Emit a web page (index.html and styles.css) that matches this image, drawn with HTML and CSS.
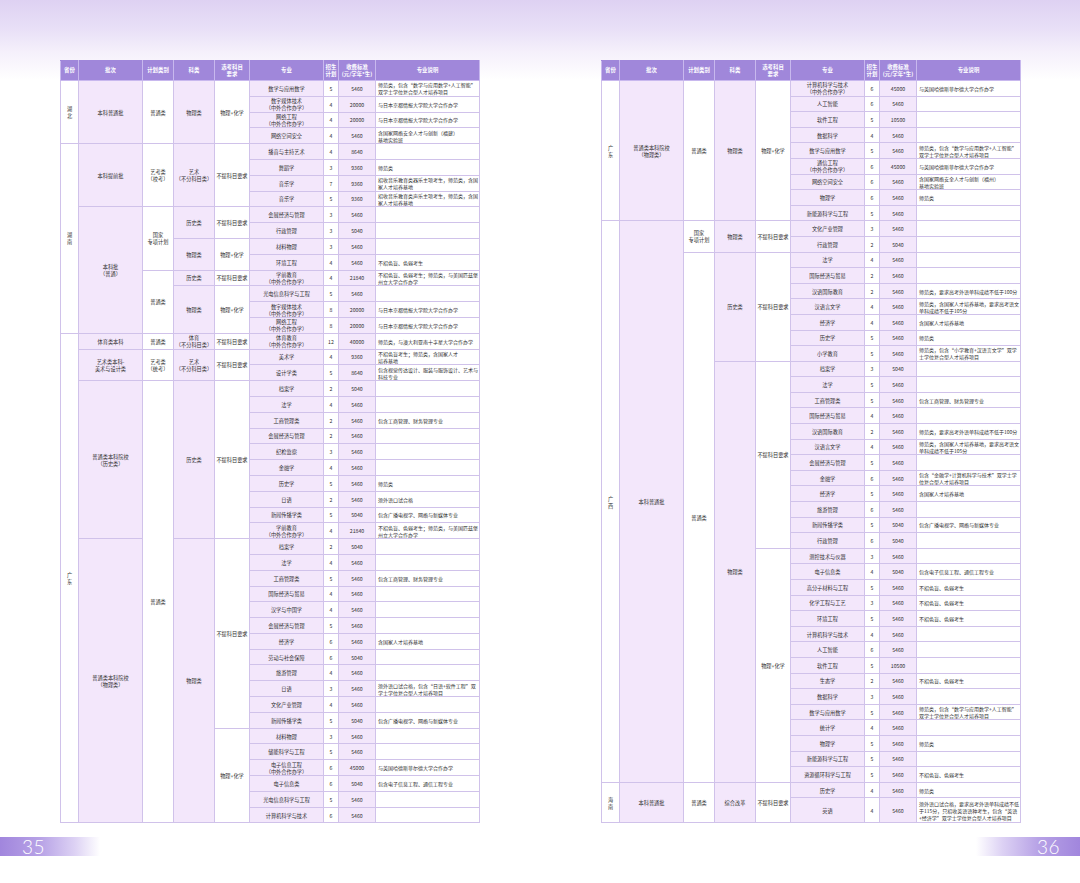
FILE: index.html
```html
<!DOCTYPE html>
<html lang="zh-CN">
<head>
<meta charset="utf-8">
<title>招生计划</title>
<link rel="stylesheet" href="styles.css">
</head>
<body>
<div class="spread">
  <section class="page page-left">
    <div class="sheet">
      <table class="plan plan-left">
        <colgroup>
          <col class="w-prov"><col class="w-batch"><col class="w-type"><col class="w-subj"><col class="w-req"><col class="w-major"><col class="w-num"><col class="w-fee"><col class="w-note">
        </colgroup>
        <tr class="head"><th>省份</th><th>批次</th><th>计划类别</th><th>科类</th><th>选考科目<br>要求</th><th>专业</th><th>招生<br>计划</th><th>收费标准<br>(元/学年*生)</th><th>专业说明</th></tr>
        <tr><td rowspan="4">湖<br>北</td><td rowspan="4" class="l">本科普通批</td><td rowspan="4">普通类</td><td rowspan="4" class="l">物理类</td><td rowspan="4">物理+化学</td><td class="l">数学与应用数学</td><td>5</td><td class="l">5460</td><td class="t">师范类，包含“数学与应用数学+人工智能”<br>双学士学位复合型人才培养项目</td></tr>
        <tr><td class="l">数字媒体技术<br>（中外合作办学）</td><td>4</td><td class="l">20000</td><td class="t">与日本京都情报大学院大学合作办学</td></tr>
        <tr><td class="l">网络工程<br>（中外合作办学）</td><td>4</td><td class="l">20000</td><td class="t">与日本京都情报大学院大学合作办学</td></tr>
        <tr><td class="l">网络空间安全</td><td>4</td><td class="l">5460</td><td class="t">含国家网络安全人才与创新（福建）<br>基地实验班</td></tr>
        <tr><td rowspan="12">湖<br>南</td><td rowspan="4" class="l">本科提前批</td><td rowspan="4">艺考类<br>（校考）</td><td rowspan="4" class="l">艺术<br>（不分科目类）</td><td rowspan="4">不提科目要求</td><td class="l">播音与主持艺术</td><td>4</td><td class="l">8640</td><td class="t"></td></tr>
        <tr><td class="l">舞蹈学</td><td>3</td><td class="l">9360</td><td class="t">师范类</td></tr>
        <tr><td class="l">音乐学</td><td>7</td><td class="l">9360</td><td class="t">招收音乐教育类器乐主项考生，师范类，含国<br>家人才培养基地</td></tr>
        <tr><td class="l">音乐学</td><td>5</td><td class="l">9360</td><td class="t">招收音乐教育类声乐主项考生，师范类，含国<br>家人才培养基地</td></tr>
        <tr><td rowspan="8" class="l">本科批<br>（普通）</td><td rowspan="4">国家<br>专项计划</td><td rowspan="2" class="l">历史类</td><td rowspan="2">不提科目要求</td><td class="l">会展经济与管理</td><td>3</td><td class="l">5460</td><td class="t"></td></tr>
        <tr><td class="l">行政管理</td><td>3</td><td class="l">5040</td><td class="t"></td></tr>
        <tr><td rowspan="2" class="l">物理类</td><td rowspan="2">物理+化学</td><td class="l">材料物理</td><td>3</td><td class="l">5460</td><td class="t"></td></tr>
        <tr><td class="l">环境工程</td><td>4</td><td class="l">5460</td><td class="t">不招色盲、色弱考生</td></tr>
        <tr><td rowspan="4">普通类</td><td class="l">历史类</td><td>不提科目要求</td><td class="l">学前教育<br>（中外合作办学）</td><td>4</td><td class="l">21840</td><td class="t">不招色盲、色弱考生；师范类，与美国匹兹堡<br>州立大学合作办学</td></tr>
        <tr><td rowspan="3" class="l">物理类</td><td rowspan="3">物理+化学</td><td class="l">光电信息科学与工程</td><td>5</td><td class="l">5460</td><td class="t"></td></tr>
        <tr><td class="l">数字媒体技术<br>（中外合作办学）</td><td>8</td><td class="l">20000</td><td class="t">与日本京都情报大学院大学合作办学</td></tr>
        <tr><td class="l">网络工程<br>（中外合作办学）</td><td>8</td><td class="l">20000</td><td class="t">与日本京都情报大学院大学合作办学</td></tr>
        <tr><td rowspan="31">广<br>东</td><td class="l">体育类本科</td><td>普通类</td><td class="l">体育<br>（不分科目类）</td><td>不提科目要求</td><td class="l">体育教育<br>（中外合作办学）</td><td>12</td><td class="l">40000</td><td class="t">师范类，与澳大利亚南十字星大学合作办学</td></tr>
        <tr><td rowspan="2" class="l">艺术类本科-<br>美术与设计类</td><td rowspan="2">艺考类<br>（统考）</td><td rowspan="2" class="l">艺术<br>（不分科目类）</td><td rowspan="2">不提科目要求</td><td class="l">美术学</td><td>4</td><td class="l">9360</td><td class="t">不招色盲考生；师范类，含国家人才<br>培养基地</td></tr>
        <tr><td class="l">设计学类</td><td>5</td><td class="l">8640</td><td class="t">包含视觉传达设计、服装与服饰设计、艺术与<br>科技专业</td></tr>
        <tr><td rowspan="10" class="l">普通类本科院校<br>（历史类）</td><td rowspan="28">普通类</td><td rowspan="10" class="l">历史类</td><td rowspan="10">不提科目要求</td><td class="l">档案学</td><td>2</td><td class="l">5040</td><td class="t"></td></tr>
        <tr><td class="l">法学</td><td>4</td><td class="l">5460</td><td class="t"></td></tr>
        <tr><td class="l">工商管理类</td><td>2</td><td class="l">5460</td><td class="t">包含工商管理、财务管理专业</td></tr>
        <tr><td class="l">会展经济与管理</td><td>2</td><td class="l">5460</td><td class="t"></td></tr>
        <tr><td class="l">纪检监察</td><td>3</td><td class="l">5460</td><td class="t"></td></tr>
        <tr><td class="l">金融学</td><td>4</td><td class="l">5460</td><td class="t"></td></tr>
        <tr><td class="l">历史学</td><td>5</td><td class="l">5460</td><td class="t">师范类</td></tr>
        <tr><td class="l">日语</td><td>2</td><td class="l">5460</td><td class="t">须外语口试合格</td></tr>
        <tr><td class="l">新闻传播学类</td><td>5</td><td class="l">5040</td><td class="t">包含广播电视学、网络与新媒体专业</td></tr>
        <tr><td class="l">学前教育<br>（中外合作办学）</td><td>4</td><td class="l">21840</td><td class="t">不招色盲、色弱考生；师范类，与美国匹兹堡<br>州立大学合作办学</td></tr>
        <tr><td rowspan="18" class="l">普通类本科院校<br>（物理类）</td><td rowspan="18" class="l">物理类</td><td rowspan="12">不提科目要求</td><td class="l">档案学</td><td>2</td><td class="l">5040</td><td class="t"></td></tr>
        <tr><td class="l">法学</td><td>4</td><td class="l">5460</td><td class="t"></td></tr>
        <tr><td class="l">工商管理类</td><td>5</td><td class="l">5460</td><td class="t">包含工商管理、财务管理专业</td></tr>
        <tr><td class="l">国际经济与贸易</td><td>4</td><td class="l">5460</td><td class="t"></td></tr>
        <tr><td class="l">汉学与中国学</td><td>4</td><td class="l">5460</td><td class="t"></td></tr>
        <tr><td class="l">会展经济与管理</td><td>5</td><td class="l">5460</td><td class="t"></td></tr>
        <tr><td class="l">经济学</td><td>6</td><td class="l">5460</td><td class="t">含国家人才培养基地</td></tr>
        <tr><td class="l">劳动与社会保障</td><td>6</td><td class="l">5040</td><td class="t"></td></tr>
        <tr><td class="l">旅游管理</td><td>4</td><td class="l">5460</td><td class="t"></td></tr>
        <tr><td class="l">日语</td><td>3</td><td class="l">5460</td><td class="t">须外语口试合格，包含“日语+软件工程”双<br>学士学位复合型人才培养项目</td></tr>
        <tr><td class="l">文化产业管理</td><td>4</td><td class="l">5460</td><td class="t"></td></tr>
        <tr><td class="l">新闻传播学类</td><td>5</td><td class="l">5040</td><td class="t">包含广播电视学、网络与新媒体专业</td></tr>
        <tr><td rowspan="6">物理+化学</td><td class="l">材料物理</td><td>3</td><td class="l">5460</td><td class="t"></td></tr>
        <tr><td class="l">储能科学与工程</td><td>5</td><td class="l">5460</td><td class="t"></td></tr>
        <tr><td class="l">电子信息工程<br>（中外合作办学）</td><td>6</td><td class="l">45000</td><td class="t">与英国哈德斯菲尔德大学合作办学</td></tr>
        <tr><td class="l">电子信息类</td><td>6</td><td class="l">5040</td><td class="t">包含电子信息工程、通信工程专业</td></tr>
        <tr><td class="l">光电信息科学与工程</td><td>5</td><td class="l">5460</td><td class="t"></td></tr>
        <tr><td class="l">计算机科学与技术</td><td>6</td><td class="l">5460</td><td class="t"></td></tr>
      </table>
    </div>
    <div class="folio folio-left"><span>35</span></div>
  </section>

  <section class="page page-right">
    <div class="sheet">
      <table class="plan plan-right">
        <colgroup>
          <col class="w-prov"><col class="w-batch"><col class="w-type"><col class="w-subj"><col class="w-req"><col class="w-major"><col class="w-num"><col class="w-fee"><col class="w-note">
        </colgroup>
        <tr class="head"><th>省份</th><th>批次</th><th>计划类别</th><th>科类</th><th>选考科目<br>要求</th><th>专业</th><th>招生<br>计划</th><th>收费标准<br>(元/学年*生)</th><th>专业说明</th></tr>
        <tr><td rowspan="9">广<br>东</td><td rowspan="9" class="l">普通类本科院校<br>（物理类）</td><td rowspan="9">普通类</td><td rowspan="9" class="l">物理类</td><td rowspan="9">物理+化学</td><td class="l">计算机科学与技术<br>（中外合作办学）</td><td>6</td><td class="l">45000</td><td class="t">与英国哈德斯菲尔德大学合作办学</td></tr>
        <tr><td class="l">人工智能</td><td>6</td><td class="l">5460</td><td class="t"></td></tr>
        <tr><td class="l">软件工程</td><td>5</td><td class="l">10500</td><td class="t"></td></tr>
        <tr><td class="l">数据科学</td><td>4</td><td class="l">5460</td><td class="t"></td></tr>
        <tr><td class="l">数学与应用数学</td><td>5</td><td class="l">5460</td><td class="t">师范类，包含“数学与应用数学+人工智能”<br>双学士学位复合型人才培养项目</td></tr>
        <tr><td class="l">通信工程<br>（中外合作办学）</td><td>6</td><td class="l">45000</td><td class="t">与英国哈德斯菲尔德大学合作办学</td></tr>
        <tr><td class="l">网络空间安全</td><td>6</td><td class="l">5460</td><td class="t">含国家网络安全人才与创新（福州）<br>基地实验班</td></tr>
        <tr><td class="l">物理学</td><td>6</td><td class="l">5460</td><td class="t">师范类</td></tr>
        <tr><td class="l">新能源科学与工程</td><td>5</td><td class="l">5460</td><td class="t"></td></tr>
        <tr><td rowspan="36">广<br>西</td><td rowspan="36" class="l">本科普通批</td><td rowspan="2">国家<br>专项计划</td><td rowspan="2" class="l">物理类</td><td rowspan="2">不提科目要求</td><td class="l">文化产业管理</td><td>3</td><td class="l">5460</td><td class="t"></td></tr>
        <tr><td class="l">行政管理</td><td>2</td><td class="l">5040</td><td class="t"></td></tr>
        <tr><td rowspan="34">普通类</td><td rowspan="7" class="l">历史类</td><td rowspan="7">不提科目要求</td><td class="l">法学</td><td>4</td><td class="l">5460</td><td class="t"></td></tr>
        <tr><td class="l">国际经济与贸易</td><td>2</td><td class="l">5460</td><td class="t"></td></tr>
        <tr><td class="l">汉语国际教育</td><td>2</td><td class="l">5460</td><td class="t">师范类，要求高考外语单科成绩不低于100分</td></tr>
        <tr><td class="l">汉语言文学</td><td>4</td><td class="l">5460</td><td class="t">师范类，含国家人才培养基地，要求高考语文<br>单科成绩不低于105分</td></tr>
        <tr><td class="l">经济学</td><td>4</td><td class="l">5460</td><td class="t">含国家人才培养基地</td></tr>
        <tr><td class="l">历史学</td><td>5</td><td class="l">5460</td><td class="t">师范类</td></tr>
        <tr><td class="l">小学教育</td><td>5</td><td class="l">5460</td><td class="t">师范类，包含“小学教育+汉语言文学”双学<br>士学位复合型人才培养项目</td></tr>
        <tr><td rowspan="27" class="l">物理类</td><td rowspan="12">不提科目要求</td><td class="l">档案学</td><td>3</td><td class="l">5040</td><td class="t"></td></tr>
        <tr><td class="l">法学</td><td>5</td><td class="l">5460</td><td class="t"></td></tr>
        <tr><td class="l">工商管理类</td><td>5</td><td class="l">5460</td><td class="t">包含工商管理、财务管理专业</td></tr>
        <tr><td class="l">国际经济与贸易</td><td>4</td><td class="l">5460</td><td class="t"></td></tr>
        <tr><td class="l">汉语国际教育</td><td>2</td><td class="l">5460</td><td class="t">师范类，要求高考外语单科成绩不低于100分</td></tr>
        <tr><td class="l">汉语言文学</td><td>4</td><td class="l">5460</td><td class="t">师范类，含国家人才培养基地，要求高考语文<br>单科成绩不低于105分</td></tr>
        <tr><td class="l">会展经济与管理</td><td>5</td><td class="l">5460</td><td class="t"></td></tr>
        <tr><td class="l">金融学</td><td>6</td><td class="l">5460</td><td class="t">包含“金融学+计算机科学与技术”双学士学<br>位复合型人才培养项目</td></tr>
        <tr><td class="l">经济学</td><td>5</td><td class="l">5460</td><td class="t">含国家人才培养基地</td></tr>
        <tr><td class="l">旅游管理</td><td>6</td><td class="l">5460</td><td class="t"></td></tr>
        <tr><td class="l">新闻传播学类</td><td>5</td><td class="l">5040</td><td class="t">包含广播电视学、网络与新媒体专业</td></tr>
        <tr><td class="l">行政管理</td><td>6</td><td class="l">5040</td><td class="t"></td></tr>
        <tr><td rowspan="15">物理+化学</td><td class="l">测控技术与仪器</td><td>3</td><td class="l">5460</td><td class="t"></td></tr>
        <tr><td class="l">电子信息类</td><td>4</td><td class="l">5040</td><td class="t">包含电子信息工程、通信工程专业</td></tr>
        <tr><td class="l">高分子材料与工程</td><td>5</td><td class="l">5460</td><td class="t">不招色盲、色弱考生</td></tr>
        <tr><td class="l">化学工程与工艺</td><td>3</td><td class="l">5460</td><td class="t">不招色盲、色弱考生</td></tr>
        <tr><td class="l">环境工程</td><td>5</td><td class="l">5460</td><td class="t">不招色盲、色弱考生</td></tr>
        <tr><td class="l">计算机科学与技术</td><td>4</td><td class="l">5460</td><td class="t"></td></tr>
        <tr><td class="l">人工智能</td><td>6</td><td class="l">5460</td><td class="t"></td></tr>
        <tr><td class="l">软件工程</td><td>5</td><td class="l">10500</td><td class="t"></td></tr>
        <tr><td class="l">生态学</td><td>2</td><td class="l">5460</td><td class="t">不招色盲、色弱考生</td></tr>
        <tr><td class="l">数据科学</td><td>3</td><td class="l">5460</td><td class="t"></td></tr>
        <tr><td class="l">数学与应用数学</td><td>5</td><td class="l">5460</td><td class="t">师范类，包含“数学与应用数学+人工智能”<br>双学士学位复合型人才培养项目</td></tr>
        <tr><td class="l">统计学</td><td>4</td><td class="l">5460</td><td class="t"></td></tr>
        <tr><td class="l">物理学</td><td>5</td><td class="l">5460</td><td class="t">师范类</td></tr>
        <tr><td class="l">新能源科学与工程</td><td>5</td><td class="l">5460</td><td class="t"></td></tr>
        <tr><td class="l">资源循环科学与工程</td><td>5</td><td class="l">5460</td><td class="t">不招色盲、色弱考生</td></tr>
        <tr><td rowspan="2">海<br>南</td><td rowspan="2" class="l">本科普通批</td><td rowspan="2">普通类</td><td rowspan="2" class="l">综合改革</td><td rowspan="2">不提科目要求</td><td class="l">历史学</td><td>4</td><td class="l">5460</td><td class="t">师范类</td></tr>
        <tr class="tall"><td class="l">英语</td><td>4</td><td class="l">5460</td><td class="t">须外语口试合格，要求高考外语单科成绩不低<br>于115分，只招收英语语种考生，包含“英语<br>+经济学”双学士学位复合型人才培养项目</td></tr>
      </table>
    </div>
    <div class="folio folio-right"><span>36</span></div>
  </section>
</div>
</body>
</html>
```

FILE: styles.css
```css
* { box-sizing: border-box; }

html, body { margin: 0; padding: 0; }

body {
  width: 1080px;
  min-height: 883px;
  background: linear-gradient(to bottom, #ded1f2 0px, #e8dff7 28px, #f5f0fb 52px, #ffffff 80px) no-repeat;
  background-color: #ffffff;
  font-family: "Noto Sans CJK SC", "Noto Sans", sans-serif;
  color: #2f2f2f;
}

.spread {
  display: flex;
  width: 1080px;
}

.page {
  width: 540px;
  padding-top: 60px;
  display: flex;
  flex-direction: column;
}

.page-left .sheet { margin-left: 60px; }
.page-right .sheet { margin-left: 61px; }

.plan {
  border-collapse: collapse;
  table-layout: fixed;
  width: 419px;
  font-size: 5.2px;
  line-height: 7px;
  background: #ffffff;
  border: 1px solid #c4b3e4;
}

.w-prov { width: 18px; }
.w-batch { width: 64px; }
.w-type { width: 31px; }
.w-subj { width: 41px; }
.w-req { width: 35px; }
.w-major { width: 74px; }
.w-num { width: 15px; }
.w-fee { width: 37px; }
.w-note { width: 104px; }

.plan td,
.plan th {
  border: 1px solid #d0c2ea;
  padding: 0 1px;
  text-align: center;
  vertical-align: middle;
  white-space: nowrap;
  overflow: hidden;
}

.plan-left tr { height: 15.8px; }
.plan-right tr { height: 15.6px; }
.plan tr.head { height: 20px; }
.plan-right tr.tall { height: 25px; }

.plan th {
  background: #a087da;
  color: #ffffff;
  font-weight: 700;
  font-size: 5.4px;
  border-color: #c8b8ee;
  border-top-color: #a087da;
  line-height: 7px;
}

.plan td.l { background: #f3e7fb; }

.plan td.t {
  text-align: left;
  padding-left: 2px;
  font-size: 5px;
}

.folio {
  margin-top: 14px;
  height: 19px;
  width: 100px;
  display: flex;
  align-items: center;
  color: #ffffff;
  font-family: "Lato", "Liberation Sans", sans-serif;
  font-weight: 300;
  font-size: 19px;
  letter-spacing: 0.5px;
}

.folio-left {
  padding-left: 22px;
  background: linear-gradient(to right, #a186dd 0%, #b7a2e6 40%, #ddd2f4 75%, rgba(255, 255, 255, 0) 100%);
}

.folio-right {
  margin-left: auto;
  width: 104px;
  justify-content: flex-end;
  padding-right: 20px;
  background: linear-gradient(to left, #a186dd 0%, #b7a2e6 40%, #ddd2f4 75%, rgba(255, 255, 255, 0) 100%);
}
```
